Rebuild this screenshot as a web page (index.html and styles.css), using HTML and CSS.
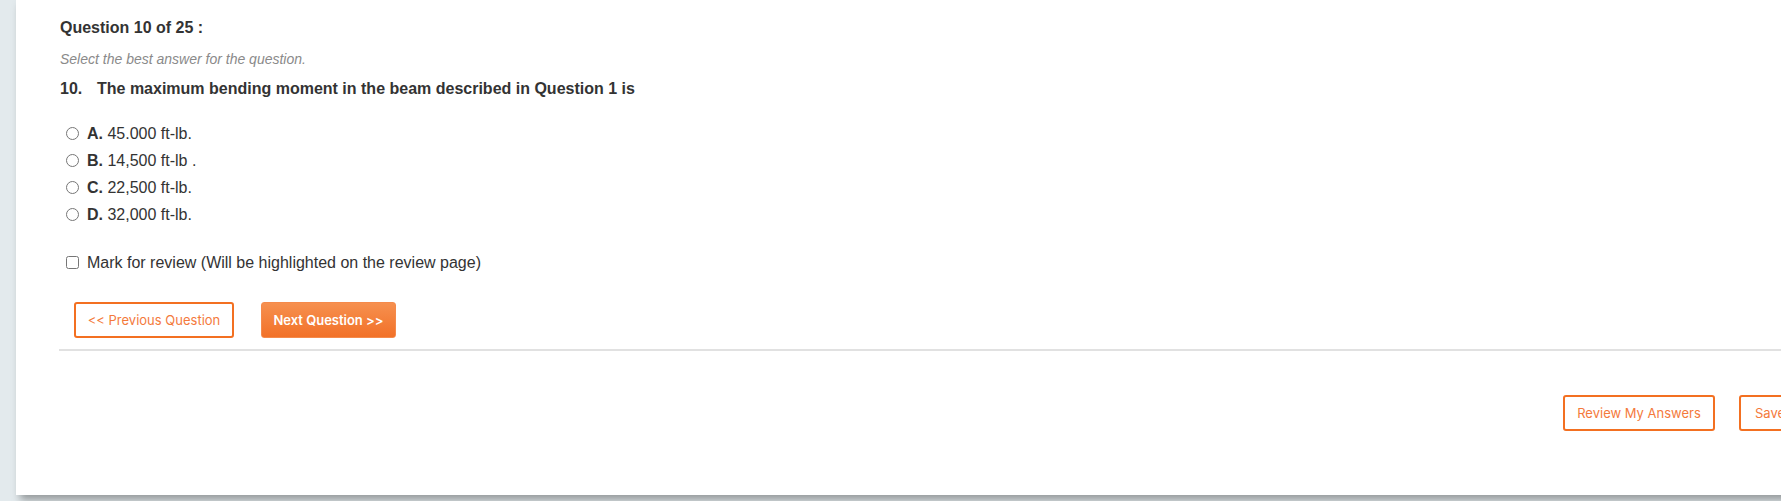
FILE: index.html
```html
<!DOCTYPE html>
<html lang="en">
<head>
<meta charset="utf-8">
<title>Question 10 of 25</title>
<link rel="stylesheet" href="styles.css">
</head>
<body>
<div class="page">
  <div class="panel">
    <div class="quiz">
      <h2 class="q-count">Question 10 of 25 :</h2>
      <p class="hint">Select the best answer for the question.</p>
      <p class="q-text"><span class="q-num">10.</span>The maximum bending moment in the beam described in Question 1 is</p>
      <ul class="options">
        <li class="option"><input type="radio" name="q10" class="radio"><span><b>A.</b> 45.000 ft-lb.</span></li>
        <li class="option"><input type="radio" name="q10" class="radio"><span><b>B.</b> 14,500 ft-lb .</span></li>
        <li class="option"><input type="radio" name="q10" class="radio"><span><b>C.</b> 22,500 ft-lb.</span></li>
        <li class="option"><input type="radio" name="q10" class="radio"><span><b>D.</b> 32,000 ft-lb.</span></li>
      </ul>
      <label class="review-mark"><input type="checkbox" class="check"><span>Mark for review (Will be highlighted on the review page)</span></label>
      <div class="nav">
        <button class="btn btn-outline btn-prev">&lt;&lt; Previous Question</button>
        <button class="btn btn-fill btn-next">Next Question &gt;&gt;</button>
      </div>
    </div>
    <div class="footer">
      <button class="btn btn-outline btn-review">Review My Answers</button>
      <button class="btn btn-outline btn-save">Save</button>
    </div>
  </div>
</div>
</body>
</html>
```

FILE: styles.css
```css
html, body {
  margin: 0;
  padding: 0;
}
body {
  background: #e3eaed;
  overflow: hidden;
  width: 1781px;
  height: 501px;
  font-family: "Liberation Sans", Arial, sans-serif;
  color: #333;
}
.page {
  padding-left: 16px;
}
.panel {
  width: 1880px;
  height: 495px;
  background: #fff;
  box-shadow: 4px 5px 8px rgba(0, 0, 0, 0.35);
  box-sizing: border-box;
}
.quiz {
  padding: 18px 0 0 44px;
}
.q-count {
  margin: 0;
  font-size: 16px;
  line-height: 20px;
  font-weight: bold;
  color: #333;
}
.hint {
  margin: 11px 0 0;
  font-size: 14px;
  line-height: 20px;
  font-style: italic;
  color: #8a8a8a;
}
.q-text {
  margin: 10px 0 0;
  font-size: 16px;
  line-height: 20px;
  font-weight: bold;
  color: #333;
}
.q-num {
  display: inline-block;
  width: 37px;
}
.options {
  list-style: none;
  margin: 21px 0 0;
  padding: 0;
}
.option, .review-mark {
  display: flex;
  align-items: center;
  height: 27px;
  font-size: 16px;
  line-height: 27px;
  color: #333;
}
.option b {
  font-weight: bold;
}
.radio, .check {
  width: 13px;
  height: 13px;
  margin: 0 8px 0 6px;
  flex: none;
}
.review-mark {
  margin-top: 21px;
}
.nav {
  display: flex;
  gap: 27px;
  margin: 26px 0 0 -1px;
  padding: 0 0 11px 15px;
  border-bottom: 2px solid #e1e1e1;
}
.btn {
  height: 36px;
  box-sizing: border-box;
  border-radius: 3px;
  font-family: Inter, "Liberation Sans", sans-serif;
  font-size: 13px;
  padding: 0;
  text-align: center;
  cursor: pointer;
}
.btn-outline {
  background: #fff;
  border: 2px solid #f37021;
  color: #f47a3c;
}
.btn-fill {
  border: 1px solid #f58a4b;
  background: linear-gradient(#f6904f, #f27128);
  color: #fff;
  font-weight: 600;
}
.btn-prev { width: 160px; }
.btn-next { width: 135px; }
.footer {
  display: flex;
  justify-content: flex-end;
  gap: 24px;
  margin-top: 44px;
  padding-right: 0;
}
.btn-review { width: 152px; }
.btn-save {
  width: 157px;
  text-align: left;
  padding-left: 14px;
}
```
